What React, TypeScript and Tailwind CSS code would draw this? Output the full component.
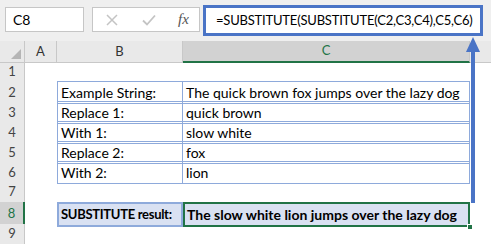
import React from 'react';

const rows = [
  { n: 1, b: '', c: '' },
  { n: 2, b: 'Example String:', c: 'The quick brown fox jumps over the lazy dog' },
  { n: 3, b: 'Replace 1:', c: 'quick brown' },
  { n: 4, b: 'With 1:', c: 'slow white' },
  { n: 5, b: 'Replace 2:', c: 'fox' },
  { n: 6, b: 'With 2:', c: 'lion' },
  { n: 7, b: '', c: '' },
];

const cols = 'grid grid-cols-[25px_32px_126px_287px_1fr]';

function RowHead({ n, active }: { n: number; active?: boolean }) {
  return (
    <div
      className={
        'flex items-center justify-center border-b border-[#d4d4d4] text-[13px] font-normal ' +
        (active
          ? 'bg-[#d2d2d2] text-[#217346] border-r-2 border-r-[#217346]'
          : 'bg-[#e9e9e9] text-[#444] border-r border-r-[#c8c8c8]')
      }
    >
      {n}
    </div>
  );
}

export default function App() {
  return (
    <div className="relative w-[491px] h-[244px] overflow-hidden bg-white font-['Lato',sans-serif] text-black">
      {/* formula bar */}
      <div className="h-[41px] bg-[#efefef] flex items-start pt-[5px] pl-[5px]">
        <div className="mt-[2px] w-[79px] h-[25px] bg-white border border-[#c6c6c6] flex items-center pl-[7px] text-[14px]">
          C8
        </div>
        <div className="ml-[8px] mt-[2px] w-[108px] h-[25px] bg-white border border-[#c6c6c6] flex items-center">
          <svg width="12" height="12" viewBox="0 0 12 12" className="ml-[13px]">
            <path d="M1 1 L11 11 M11 1 L1 11" stroke="#c4c4c4" strokeWidth="1.5" fill="none" />
          </svg>
          <svg width="14" height="12" viewBox="0 0 14 12" className="ml-[24px]">
            <path d="M1 6.5 L5 10.5 L13 1.5" stroke="#c4c4c4" strokeWidth="1.8" fill="none" />
          </svg>
          <span className="ml-[22px] font-['Liberation_Serif',serif] italic text-[15px] text-[#555]">fx</span>
        </div>
        <div className="ml-[3px] w-[280px] h-[31px] border-[3px] border-[#4a74c6] bg-white flex items-center pl-[10px] text-[13px] tracking-[-0.2px] whitespace-nowrap overflow-hidden">
          =SUBSTITUTE(SUBSTITUTE(C2,C3,C4),C5,C6)
        </div>
      </div>

      {/* column headers */}
      <div className={cols + ' h-[21px] bg-[#e9e9e9] text-[13px] text-[#333]'}>
        <div className="relative border-r border-b border-[#c8c8c8]">
          <div className="absolute right-[3px] bottom-[3px] w-0 h-0 border-l-[10px] border-l-transparent border-b-[10px] border-b-[#b5b5b5]" />
        </div>
        <div className="flex items-center justify-center border-r border-b border-[#c8c8c8]">A</div>
        <div className="flex items-center justify-center border-r border-b border-[#c8c8c8]">B</div>
        <div className="flex items-center justify-center bg-[#d2d2d2] text-[#217346] border-r border-[#c8c8c8] border-b-2 border-b-[#217346]">
          C
        </div>
        <div className="border-b border-[#c8c8c8]" />
      </div>

      {/* rows */}
      {rows.map((r) => (
        <div key={r.n} className={cols + ' h-[20px] text-[14px]'}>
          <RowHead n={r.n} />
          <div />
          {r.b ? (
            <>
              <div className="flex items-center pl-[3px] border border-[#8eaadb] -mt-px">{r.b}</div>
              <div className="flex items-center pl-[3px] border border-l-0 border-[#8eaadb] -mt-px whitespace-nowrap">{r.c}</div>
            </>
          ) : (
            <>
              <div />
              <div />
            </>
          )}
          <div />
        </div>
      ))}

      {/* row 8 */}
      <div className={cols + ' h-[22px] text-[14px] font-bold'}>
        <RowHead n={8} active />
        <div />
        <div className="flex items-center pl-[2px] bg-[#d9e1f2] border-2 border-[#8eaadb] whitespace-nowrap overflow-hidden text-[13px] tracking-[-0.3px]">
          SUBSTITUTE result:
        </div>
        <div className="relative flex items-center pl-[2px] bg-[#d9e1f2] border-2 border-[#217346] whitespace-nowrap">
          The slow white lion jumps over the lazy dog
          <div className="absolute -right-[5px] -bottom-[5px] w-[6px] h-[6px] bg-[#217346] border border-white" />
        </div>
        <div />
      </div>

      <div className={cols + ' h-[20px] text-[14px]'}>
        <RowHead n={9} />
      </div>

      {/* arrow */}
      <svg className="absolute left-[464px] top-[36px]" width="18" height="168" viewBox="0 0 18 168">
        <path d="M9 1 L16 16 L2 16 Z" fill="#4a74c6" />
        <rect x="7" y="15" width="4" height="152" fill="#4a74c6" />
      </svg>
    </div>
  );
}
